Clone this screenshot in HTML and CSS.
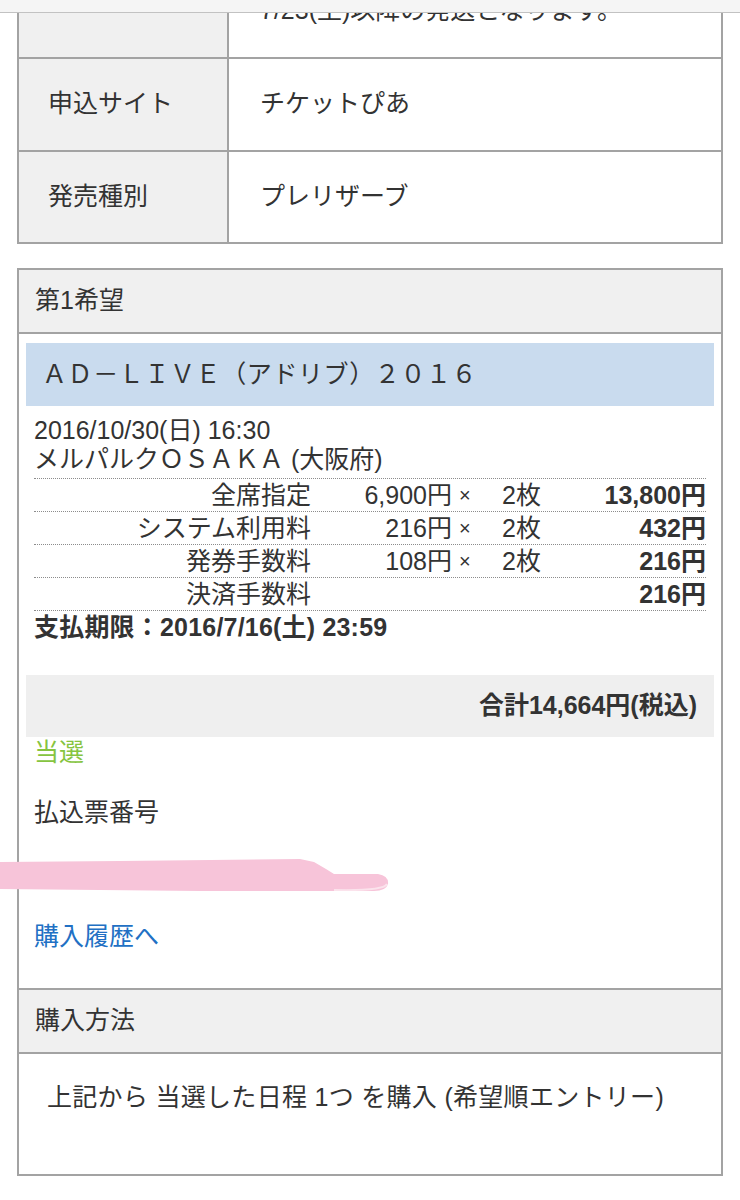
FILE: index.html
```html
<!DOCTYPE html>
<html lang="ja">
<head>
<meta charset="utf-8">
<title>申込内容</title>
<link rel="stylesheet" href="styles.css">
</head>
<body>
<div class="topbar"></div>

<div class="info-table">
  <div class="row">
    <div class="label"></div>
    <div class="value">チケットは公演日の約10日前<br>7/23(土)以降の発送となります。</div>
  </div>
  <div class="row">
    <div class="label">申込サイト</div>
    <div class="value">チケットぴあ</div>
  </div>
  <div class="row">
    <div class="label">発売種別</div>
    <div class="value">プレリザーブ</div>
  </div>
</div>

<div class="card">
  <div class="card-head">第1希望</div>
  <div class="card-body">
    <div class="banner">ＡＤ－ＬＩＶＥ（アドリブ）２０１６</div>
    <div class="event">
      <div class="event-info">
        <div>2016/10/30(日) 16:30</div>
        <div>メルパルクＯＳＡＫＡ (大阪府)</div>
      </div>
      <div class="fees">
        <div class="fee">
          <span class="fee-name">全席指定</span>
          <span class="fee-price">6,900円</span>
          <span class="fee-x">×</span>
          <span class="fee-qty">2枚</span>
          <span class="fee-sum">13,800円</span>
        </div>
        <div class="fee">
          <span class="fee-name">システム利用料</span>
          <span class="fee-price">216円</span>
          <span class="fee-x">×</span>
          <span class="fee-qty">2枚</span>
          <span class="fee-sum">432円</span>
        </div>
        <div class="fee">
          <span class="fee-name">発券手数料</span>
          <span class="fee-price">108円</span>
          <span class="fee-x">×</span>
          <span class="fee-qty">2枚</span>
          <span class="fee-sum">216円</span>
        </div>
        <div class="fee">
          <span class="fee-name">決済手数料</span>
          <span class="fee-price"></span>
          <span class="fee-x"></span>
          <span class="fee-qty"></span>
          <span class="fee-sum">216円</span>
        </div>
      </div>
      <div class="deadline">支払期限：2016/7/16(土) 23:59</div>
    </div>
    <div class="total">合計14,664円(税込)</div>
    <div class="result">
      <div class="won">当選</div>
      <div class="slip">払込票番号</div>
      <a class="history" href="#">購入履歴へ</a>
    </div>
  </div>
  <div class="card-head">購入方法</div>
  <div class="card-method">上記から 当選した日程 1つ を購入 (希望順エントリー)</div>
</div>

<div class="redact">
  <svg width="392" height="38" viewBox="0 0 392 38">
    <path d="M0 5 L120 4 L300 2 L314 5 L326 12 L334 17 L378 17 Q389 19 388 27 Q386 34 374 34 L200 34 L0 32 Z" fill="#f7c4d9"/>
    <path d="M334 33 Q384 34 387 27" fill="none" stroke="#fbe3ec" stroke-width="2"/>
  </svg>
</div>
</body>
</html>
```

FILE: styles.css
```css
html, body {
  margin: 0;
  padding: 0;
  background: #ffffff;
}

body {
  font-family: "Liberation Sans", "Noto Sans CJK JP", sans-serif;
  font-size: 25px;
  color: #333333;
  position: relative;
  overflow: hidden;
  height: 1200px;
}

.topbar {
  position: fixed;
  top: 0;
  left: 0;
  right: 0;
  height: 12px;
  background: #f5f5f5;
  border-bottom: 1px solid #c2c2c2;
  z-index: 5;
}

.info-table {
  margin: -70px 17px 0;
  border: 2px solid #a3a3a3;
}

.row {
  display: grid;
  grid-template-columns: 210px 1fr;
}

.row + .row {
  border-top: 2px solid #a3a3a3;
}

.label {
  background: #f0f0f0;
  border-right: 2px solid #a3a3a3;
  padding: 28px 0 30px 29px;
  line-height: 33px;
}

.value {
  padding: 28px 0 30px 31px;
  line-height: 33px;
}

.row:first-child .label,
.row:first-child .value {
  padding-top: 29px;
  padding-bottom: 30px;
}

.row:last-child .label,
.row:last-child .value {
  padding-bottom: 29px;
}

.card {
  margin: 24px 17px 0;
  border: 2px solid #a3a3a3;
}

.card-head {
  background: #f0f0f0;
  padding: 14px 16px 15px;
  line-height: 33px;
  border-bottom: 2px solid #a3a3a3;
}

.card-body {
  padding: 9px 7px 36px;
  border-bottom: 2px solid #a3a3a3;
}

.banner {
  background: #c9dbee;
  padding: 15px 16px;
  line-height: 33px;
  font-size: 25px;
  letter-spacing: 0.6px;
  white-space: nowrap;
}

.event {
  margin-top: 10px;
  padding: 0 8px;
}

.event-info {
  line-height: 29px;
}

.fees {
  margin-top: 4px;
  border-bottom: 1px dotted #8c8c8c;
}

.fee {
  display: grid;
  grid-template-columns: 277px 141px 50px 80px 1fr;
  line-height: 32px;
  border-top: 1px dotted #8c8c8c;
}

.fee-name,
.fee-price,
.fee-sum {
  text-align: right;
}

.fee-x {
  padding-left: 7px;
  font-size: 20px;
}

.fee-sum {
  font-weight: bold;
}

.deadline {
  font-weight: bold;
  line-height: 32px;
  letter-spacing: 0.2px;
}

.total {
  margin-top: 32px;
  background: #efefef;
  text-align: right;
  font-weight: bold;
  padding: 14px 17px 15px;
  line-height: 33px;
}

.result {
  padding: 0 8px;
}

.won {
  color: #86c440;
  line-height: 30px;
}

.slip {
  margin-top: 29px;
  line-height: 32px;
}

.history {
  display: block;
  margin-top: 92px;
  line-height: 32px;
  color: #2170c4;
  text-decoration: none;
}

.card-method {
  padding: 27px 28px 60px;
  line-height: 33px;
  letter-spacing: 0.3px;
}

.redact {
  position: absolute;
  top: 857px;
  left: 0;
  line-height: 0;
}
```
